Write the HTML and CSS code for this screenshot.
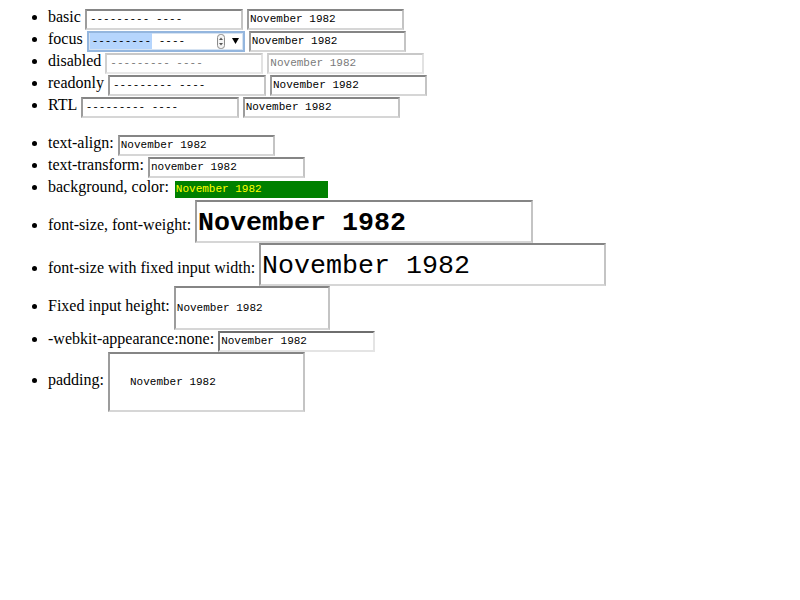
FILE: index.html
```html
<!DOCTYPE html>
<html>
<head>
<meta charset="utf-8">
<link rel="stylesheet" href="styles.css">
</head>
<body>
<ul class="list list-top">
  <li>basic <span class="field month"><span class="seg">---------</span> <span class="seg">----</span></span> <span class="field">November 1982</span></li>
  <li>focus <span class="field month focused"><span class="segs"><span class="seg sel">---------</span> <span class="seg">----</span></span><svg class="spin" width="8" height="15" viewBox="0 0 8 15"><rect x="0.5" y="0.5" width="7" height="14" rx="3" ry="3" fill="#f4f4f4" stroke="#8a8a8a"/><path d="M2 6 L4 3.5 L6 6 Z" fill="#555"/><path d="M2 9 L4 11.5 L6 9 Z" fill="#555"/></svg><svg class="drop" width="7" height="6" viewBox="0 0 7 6"><path d="M0 0 H7 L3.5 6 Z" fill="#000"/></svg></span> <span class="field">November 1982</span></li>
  <li>disabled <span class="field month disabled"><span class="seg">---------</span> <span class="seg">----</span></span> <span class="field disabled">November 1982</span></li>
  <li>readonly <span class="field month"><span class="seg">---------</span> <span class="seg">----</span></span> <span class="field">November 1982</span></li>
  <li>RTL <span class="field month"><span class="seg">---------</span> <span class="seg">----</span></span> <span class="field">November 1982</span></li>
</ul>
<ul class="list list-bottom">
  <li>text-align: <span class="field">November 1982</span></li>
  <li>text-transform: <span class="field lower">November 1982</span></li>
  <li>background, color: <span class="field colored">November 1982</span></li>
  <li>font-size, font-weight: <span class="field big bold">November 1982</span></li>
  <li>font-size with fixed input width: <span class="field big wide">November 1982</span></li>
  <li>Fixed input height: <span class="field tall">November 1982</span></li>
  <li>-webkit-appearance:none: <span class="field plain">November 1982</span></li>
  <li>padding: <span class="field padded">November 1982</span></li>
</ul>
</body>
</html>
```
FILE: styles.css
```css
html, body {
  background: #ffffff;
}
body {
  margin: 8px;
  font-family: "Liberation Serif", "Times New Roman", serif;
  font-size: 16px;
  color: #000000;
}
.list {
  padding-left: 40px;
  margin: 0;
}
.list-bottom {
  margin-top: 16px;
}
.field {
  display: inline-block;
  box-sizing: border-box;
  width: 157px;
  height: 21px;
  padding: 1px;
  border: 2px solid;
  border-color: #858585 #c4c4c4 #d6d6d6 #9c9c9c;
  font-family: "Liberation Mono", "Courier New", monospace;
  font-size: 11px;
  line-height: 15px;
  white-space: pre;
  color: #000000;
  background: #ffffff;
  vertical-align: baseline;
}
.month {
  width: 158px;
  padding-left: 3px;
}
.focused {
  display: inline-flex;
  align-items: center;
  border-color: #94b6de;
  box-shadow: inset 0 0 0 1px #d6e3f2;
  padding-left: 1px;
  padding-right: 4px;
}
.segs {
  flex: 1;
  white-space: pre;
}
.seg.sel {
  display: inline-block;
  background: #b5d5fd;
  padding: 0 1px 0 2px;
  line-height: 16px;
}
.spin {
  display: block;
  margin-right: 7px;
}
.drop {
  display: block;
}
.disabled {
  border-color: #c8c8c8 #e2e2e2 #e8e8e8 #d0d0d0;
  color: #7a7a7a;
}
.lower {
  text-transform: lowercase;
}
.colored {
  background: #008000;
  color: #ffff00;
  border-color: transparent;
  background-clip: padding-box;
}
.big {
  height: 43px;
  padding: 4px 1px 0;
  font-size: 26.67px;
  line-height: 35px;
}
.bold {
  width: 338px;
  font-weight: bold;
}
.wide {
  width: 347px;
}
.tall {
  width: 156px;
  height: 44px;
  line-height: 38px;
}
.plain {
  width: 157px;
  border-color: #6e6e6e #e4e4e4 #e4e4e4 #7a7a7a;
}
.padded {
  width: 197px;
  height: 60px;
  padding: 20px;
  line-height: 16px;
}
```
